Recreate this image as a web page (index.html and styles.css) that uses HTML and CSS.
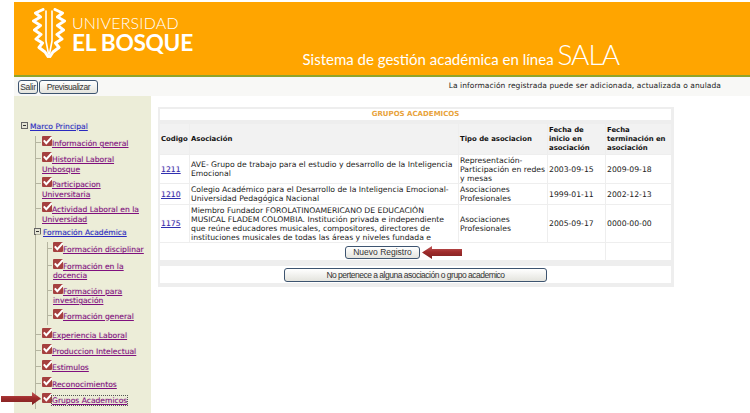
FILE: index.html
```html
<!DOCTYPE html>
<html lang="es">
<head>
    <meta charset="UTF-8">
    <title>Sistema de gestión académica en línea SALA</title>
    <link rel="stylesheet" href="styles.css">
</head>
<body>
    <svg class="defs" width="0" height="0">
        <symbol id="check" viewBox="0 0 10 10">
            <rect width="10" height="10" rx="1" fill="#a5403f"/>
            <path d="M1.8 4.3 L4.3 7.2 L10 1" fill="none" stroke="#fff" stroke-width="2"/>
        </symbol>
        <linearGradient id="arrow-red" x1="0" y1="0" x2="0" y2="1">
            <stop offset="0" stop-color="#c25a5a"/>
            <stop offset="0.45" stop-color="#a02c2c"/>
            <stop offset="1" stop-color="#7a2020"/>
        </linearGradient>
    </svg>

    <!-- Header -->
    <div class="header">
        <div class="brand">
            <svg class="logo" viewBox="0 0 34 50" width="34" height="50">
                <g fill="none" stroke="#fff" stroke-linejoin="round" stroke-linecap="round">
                    <g id="laurel">
                        <path d="M11 1.5 L3.5 5 L8.5 9 L1.5 13 L8.5 17.5 L2.5 22 L9 26.5 L4 31 L10.5 35 L7 39.5 L13 44 L16 48.5" stroke-width="3"/>
                        <path d="M14 3 V33 L16.5 46" stroke-width="1.6"/>
                    </g>
                    <use href="#laurel" transform="matrix(-1 0 0 1 34 0)"/>
                </g>
            </svg>
            <div class="brand-name">
                <div class="brand-top">UNIVERSIDAD</div>
                <div class="brand-main">EL BOSQUE</div>
            </div>
        </div>
        <div class="system-title">Sistema de gestión académica en línea <span class="sala">SALA</span></div>
    </div>

    <!-- Toolbar -->
    <div class="toolbar">
        <div class="toolbar-buttons">
            <button class="btn">Salir</button>
            <button class="btn btn-preview">Previsualizar</button>
        </div>
        <div class="toolbar-note">La información registrada puede ser adicionada, actualizada o anulada</div>
    </div>

    <div class="main">
        <!-- Menu tree -->
        <div class="sidebar">
            <div class="tree-root"><span class="toggle"></span><a class="folder" href="#">Marco Principal</a></div>
            <ul class="tree">
                <li class="h16"><svg class="chk"><use href="#check"/></svg><a href="#">Información general</a></li>
                <li class="h25"><svg class="chk"><use href="#check"/></svg><a href="#">Historial Laboral Unbosque</a></li>
                <li class="h25"><svg class="chk"><use href="#check"/></svg><a href="#">Participacion Universitaria</a></li>
                <li class="h25"><svg class="chk"><use href="#check"/></svg><a href="#">Actividad Laboral en la Universidad</a></li>
                <li class="branch"><span class="toggle"></span><a class="folder" href="#">Formación Académica</a>
                    <ul class="tree sub">
                        <li class="h16"><svg class="chk"><use href="#check"/></svg><a href="#">Formación disciplinar</a></li>
                        <li class="h25"><svg class="chk"><use href="#check"/></svg><a href="#">Formación en la docencia</a></li>
                        <li class="h25"><svg class="chk"><use href="#check"/></svg><a href="#">Formación para investigación</a></li>
                        <li class="h16"><svg class="chk"><use href="#check"/></svg><a href="#">Formación general</a></li>
                    </ul>
                </li>
                <li class="h16"><svg class="chk"><use href="#check"/></svg><a href="#">Experiencia Laboral</a></li>
                <li class="h16"><svg class="chk"><use href="#check"/></svg><a href="#">Produccion Intelectual</a></li>
                <li class="h16"><svg class="chk"><use href="#check"/></svg><a href="#">Estimulos</a></li>
                <li class="h16"><svg class="chk"><use href="#check"/></svg><a href="#">Reconocimientos</a></li>
                <li class="h16"><svg class="chk"><use href="#check"/></svg><a class="current" href="#">Grupos Academicos</a></li>
            </ul>
        </div>

        <!-- Content -->
        <div class="content">
            <div class="panel">
                <table class="grupos">
                    <colgroup>
                        <col class="col-code">
                        <col class="col-name">
                        <col class="col-type">
                        <col class="col-start">
                        <col class="col-end">
                    </colgroup>
                    <tr><td colspan="5" class="caption">GRUPOS ACADEMICOS</td></tr>
                    <tr class="heads">
                        <th>Codigo</th>
                        <th>Asociación</th>
                        <th>Tipo de asociacion</th>
                        <th>Fecha de inicio en asociación</th>
                        <th>Fecha terminación en asociación</th>
                    </tr>
                    <tr class="row-3">
                        <td><a href="#">1211</a></td>
                        <td>AVE- Grupo de trabajo para el estudio y desarrollo de la Inteligencia Emocional</td>
                        <td>Representación- Participación en redes y mesas</td>
                        <td>2003-09-15</td>
                        <td>2009-09-18</td>
                    </tr>
                    <tr class="row-2">
                        <td><a href="#">1210</a></td>
                        <td>Colegio Académico para el Desarrollo de la Inteligencia Emocional- Universidad Pedagógica Nacional</td>
                        <td>Asociaciones Profesionales</td>
                        <td>1999-01-11</td>
                        <td>2002-12-13</td>
                    </tr>
                    <tr class="row-4">
                        <td><a href="#">1175</a></td>
                        <td>Miembro Fundador FOROLATINOAMERICANO DE EDUCACIÓN MUSICAL FLADEM COLOMBIA. Institución privada e independiente que reúne educadores musicales, compositores, directores de instituciones musicales de todas las áreas y niveles fundada e</td>
                        <td>Asociaciones Profesionales</td>
                        <td>2005-09-17</td>
                        <td>0000-00-00</td>
                    </tr>
                    <tr class="actions">
                        <td colspan="4"><button class="btn btn-new">Nuevo Registro</button></td>
                        <td></td>
                    </tr>
                </table>
                <div class="no-group">
                    <button class="btn btn-none">No pertenece a alguna asociación o grupo academico</button>
                </div>
            </div>
        </div>
    </div>

    <!-- Callout arrows -->
    <svg class="arrow arrow-menu" viewBox="0 0 40 13" width="40" height="13">
        <path d="M0 4 H31 V0 L40 6.5 L31 13 V10 H0 Z" fill="url(#arrow-red)"/>
    </svg>
    <svg class="arrow arrow-new" viewBox="0 0 40 13" width="40" height="13">
        <path d="M40 3 H10 V0 L0 6.5 L10 13 V10 H40 Z" fill="url(#arrow-red)"/>
    </svg>
</body>
</html>
```

FILE: styles.css
```css
body {
    margin: 0;
    padding: 2px 0 0 14px;
    background-color: #fff;
    font-family: 'DejaVu Sans', Verdana, sans-serif;
    font-size: 7.6px;
    color: #222;
    height: 411px;
    overflow: hidden;
    position: relative;
}

.defs {
    position: absolute;
}

.header {
    height: 73px;
    background-color: #ffa500;
    display: flex;
    justify-content: space-between;
    color: #fff;
    border-bottom: 2px solid #8fa52c;
}

.brand {
    display: flex;
    align-items: flex-start;
    padding: 6px 0 0 18px;
    gap: 6px;
}

.brand-name {
    font-family: 'Lato', sans-serif;
    padding-top: 7px;
}

.brand-top {
    font-size: 16px;
    line-height: 16px;
    font-weight: 300;
    letter-spacing: 0.2px;
}

.brand-main {
    font-size: 22.7px;
    line-height: 24px;
    font-weight: 700;
    letter-spacing: -0.3px;
}

.system-title {
    font-family: 'Lato', sans-serif;
    font-size: 15px;
    align-self: flex-end;
    padding: 0 131px 7px 0;
    white-space: nowrap;
}

.sala {
    font-size: 28px;
    line-height: 28px;
    font-weight: 300;
    letter-spacing: -1px;
}

.toolbar {
    height: 19px;
    background-color: #f8f8f6;
    display: flex;
    justify-content: space-between;
    align-items: center;
    padding: 0 29px 0 4px;
}

.toolbar-buttons {
    display: flex;
    gap: 1px;
    padding-top: 1px;
}

.toolbar-note {
    font-size: 7.5px;
    letter-spacing: 0.08px;
    color: #222;
    padding-bottom: 2px;
}

.btn {
    font-family: 'Liberation Sans', Arial, sans-serif;
    font-size: 8.5px;
    color: #333;
    height: 14px;
    padding: 0;
    background: linear-gradient(#fff, #e4e4de);
    border: 1px solid #3d5470;
    border-radius: 3px;
}

.toolbar-buttons .btn {
    width: 20px;
    letter-spacing: -0.3px;
}

.toolbar-buttons .btn-preview {
    width: 59px;
    letter-spacing: -0.4px;
}

.main {
    display: flex;
    align-items: flex-start;
}

.sidebar {
    width: 137px;
    height: 318px;
    box-sizing: border-box;
    flex-shrink: 0;
    background-color: #ecedd8;
    padding: 26px 5px 0 7px;
}

a {
    color: #80107e;
    text-shadow: 0 0 1px rgba(128, 16, 126, 0.35);
}

.tree-root, .branch {
    line-height: 10px;
}

a.folder {
    color: #2a2ac0;
    text-shadow: 0 0 1px rgba(42, 42, 192, 0.35);
}

.toggle {
    display: inline-block;
    width: 5px;
    height: 5px;
    border: 1px solid #666;
    background: #e4e4d4 linear-gradient(#333, #333) center / 3px 1px no-repeat;
    margin-right: 2px;
}

.tree {
    list-style: none;
    margin: 4px 0 0 14px;
    padding: 0 0 0 6px;
    border-left: 1px solid #b5b5a0;
}

.tree li {
    line-height: 9.5px;
    position: relative;
}

.tree li::before {
    content: "";
    position: absolute;
    left: -6px;
    top: 6px;
    width: 5px;
    border-top: 1px solid #b5b5a0;
}

.h16 {
    height: 16.25px;
}

.h25 {
    height: 25px;
}

.tree .branch {
    margin-top: 1px;
    line-height: 10px;
}

.tree .branch .toggle {
    margin-left: -8px;
}

.tree .sub {
    margin: 4px 0 3px 5px;
    padding-left: 5px;
}

.chk {
    width: 10px;
    height: 10px;
    vertical-align: baseline;
}

.current {
    outline: 1px dotted #555;
}

.content {
    flex: 1;
    padding: 11px 0 0 7px;
}

.panel {
    width: 516px;
    box-sizing: border-box;
    background-color: #eeeeee;
    padding: 1px 2px 4px 1px;
}

.grupos {
    width: 100%;
    border-collapse: separate;
    border-spacing: 1px;
    table-layout: fixed;
    background-color: #eeeeee;
    line-height: 9px;
    font-size: 7.7px;
}

.grupos td, .grupos th {
    background-color: #fff;
    padding: 0 1px;
    text-align: left;
    vertical-align: middle;
}

.grupos .caption {
    height: 11px;
    text-align: center;
    font-weight: bold;
    font-size: 7px;
    color: #e8a33c;
    border-bottom: 3px solid #eeeeee;
}

.grupos .heads th {
    background-color: #f2f2f2;
    font-weight: bold;
    font-size: 6.9px;
    color: #111;
    height: 30px;
}

.col-code { width: 29px; }
.col-name { width: 268px; }
.col-type { width: 88px; }
.col-start { width: 57px; }
.col-end { width: 65px; }

.row-3 td { height: 28px; }
.row-2 td { height: 20px; }
.row-4 td { height: 37px; }

.grupos td a {
    color: #3030b0;
}

.grupos .actions td {
    height: 17px;
    text-align: center;
    padding-top: 1px;
    box-sizing: border-box;
}

.btn-new {
    width: 75px;
    height: 13px;
    vertical-align: middle;
}

.no-group {
    margin: 5px 1px 0;
    height: 17px;
    background-color: #fff;
    display: flex;
    justify-content: center;
    align-items: center;
}

.btn-none {
    width: 263px;
    height: 14px;
    letter-spacing: -0.5px;
}

.arrow {
    position: absolute;
}

.arrow-menu {
    left: 1px;
    top: 392px;
}

.arrow-new {
    left: 422px;
    top: 246px;
}
```
